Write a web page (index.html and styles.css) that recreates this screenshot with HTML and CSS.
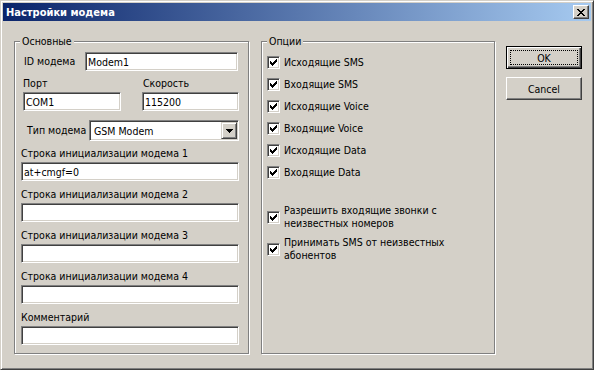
FILE: index.html
```html
<!DOCTYPE html>
<html lang="ru">
<head>
  <meta charset="UTF-8" />
  <title>Настройки модема</title>
  <link rel="stylesheet" href="styles.css">
</head>
<body>

  <div class="window">
    <!-- заголовок окна -->
    <div class="titlebar">
      <span class="title">Настройки модема</span>
      <button class="close">
        <svg width="8" height="7" viewBox="0 0 8 7" shape-rendering="crispEdges"><path d="M0 0h2v1h-2z M6 0h2v1h-2z M1 1h2v1h-2z M5 1h2v1h-2z M2 2h4v1h-4z M3 3h2v1h-2z M2 4h4v1h-4z M1 5h2v1h-2z M5 5h2v1h-2z M0 6h2v1h-2z M6 6h2v1h-2z" fill="#000"/></svg>
      </button>
    </div>

    <div class="body">
      <!-- Основные -->
      <div class="group group-main">
        <div class="group-title">Основные</div>

        <div class="row-id">
          <span class="label">ID модема</span>
          <input class="field" type="text" value="Modem1">
        </div>

        <div class="row-pair">
          <div class="col-port">
            <span class="label">Порт</span>
            <input class="field" type="text" value="COM1">
          </div>
          <div class="col-speed">
            <span class="label">Скорость</span>
            <input class="field" type="text" value="115200">
          </div>
        </div>

        <div class="row-type">
          <span class="label">Тип модема</span>
          <div class="combo">
            <span class="combo-text">GSM Modem</span>
            <span class="combo-btn">
              <svg width="7" height="4" viewBox="0 0 7 4" shape-rendering="crispEdges"><path d="M0 0h7v1h-1v1h-1v1h-1v1h-1v-1h-1v-1h-1v-1h-1z" fill="#000"/></svg>
            </span>
          </div>
        </div>

        <div class="init first">
          <span class="label">Строка инициализации модема 1</span>
          <input class="field" type="text" value="at+cmgf=0">
        </div>
        <div class="init">
          <span class="label">Строка инициализации модема 2</span>
          <input class="field" type="text" value="">
        </div>
        <div class="init">
          <span class="label">Строка инициализации модема 3</span>
          <input class="field" type="text" value="">
        </div>
        <div class="init">
          <span class="label">Строка инициализации модема 4</span>
          <input class="field" type="text" value="">
        </div>
        <div class="init">
          <span class="label">Комментарий</span>
          <input class="field" type="text" value="">
        </div>
      </div>

      <!-- Опции -->
      <div class="group group-opts">
        <div class="group-title">Опции</div>

        <div class="opts-list">
          <div class="check-row"><span class="check"><svg width="7" height="7" viewBox="0 0 7 7" shape-rendering="crispEdges"><path d="M6 0h1v1h-1z M5 1h2v1h-2z M0 2h1v1h-1z M4 2h3v1h-3z M0 3h2v1h-2z M3 3h3v1h-3z M0 4h5v1h-5z M1 5h3v1h-3z M2 6h1v1h-1z" fill="#000"/></svg></span>Исходящие SMS</div>
          <div class="check-row"><span class="check"><svg width="7" height="7" viewBox="0 0 7 7" shape-rendering="crispEdges"><path d="M6 0h1v1h-1z M5 1h2v1h-2z M0 2h1v1h-1z M4 2h3v1h-3z M0 3h2v1h-2z M3 3h3v1h-3z M0 4h5v1h-5z M1 5h3v1h-3z M2 6h1v1h-1z" fill="#000"/></svg></span>Входящие SMS</div>
          <div class="check-row"><span class="check"><svg width="7" height="7" viewBox="0 0 7 7" shape-rendering="crispEdges"><path d="M6 0h1v1h-1z M5 1h2v1h-2z M0 2h1v1h-1z M4 2h3v1h-3z M0 3h2v1h-2z M3 3h3v1h-3z M0 4h5v1h-5z M1 5h3v1h-3z M2 6h1v1h-1z" fill="#000"/></svg></span>Исходящие Voice</div>
          <div class="check-row"><span class="check"><svg width="7" height="7" viewBox="0 0 7 7" shape-rendering="crispEdges"><path d="M6 0h1v1h-1z M5 1h2v1h-2z M0 2h1v1h-1z M4 2h3v1h-3z M0 3h2v1h-2z M3 3h3v1h-3z M0 4h5v1h-5z M1 5h3v1h-3z M2 6h1v1h-1z" fill="#000"/></svg></span>Входящие Voice</div>
          <div class="check-row"><span class="check"><svg width="7" height="7" viewBox="0 0 7 7" shape-rendering="crispEdges"><path d="M6 0h1v1h-1z M5 1h2v1h-2z M0 2h1v1h-1z M4 2h3v1h-3z M0 3h2v1h-2z M3 3h3v1h-3z M0 4h5v1h-5z M1 5h3v1h-3z M2 6h1v1h-1z" fill="#000"/></svg></span>Исходящие Data</div>
          <div class="check-row"><span class="check"><svg width="7" height="7" viewBox="0 0 7 7" shape-rendering="crispEdges"><path d="M6 0h1v1h-1z M5 1h2v1h-2z M0 2h1v1h-1z M4 2h3v1h-3z M0 3h2v1h-2z M3 3h3v1h-3z M0 4h5v1h-5z M1 5h3v1h-3z M2 6h1v1h-1z" fill="#000"/></svg></span>Входящие Data</div>

          <div class="check-row multi first"><span class="check"><svg width="7" height="7" viewBox="0 0 7 7" shape-rendering="crispEdges"><path d="M6 0h1v1h-1z M5 1h2v1h-2z M0 2h1v1h-1z M4 2h3v1h-3z M0 3h2v1h-2z M3 3h3v1h-3z M0 4h5v1h-5z M1 5h3v1h-3z M2 6h1v1h-1z" fill="#000"/></svg></span><span>Разрешить входящие звонки с<br>неизвестных номеров</span></div>
          <div class="check-row multi"><span class="check"><svg width="7" height="7" viewBox="0 0 7 7" shape-rendering="crispEdges"><path d="M6 0h1v1h-1z M5 1h2v1h-2z M0 2h1v1h-1z M4 2h3v1h-3z M0 3h2v1h-2z M3 3h3v1h-3z M0 4h5v1h-5z M1 5h3v1h-3z M2 6h1v1h-1z" fill="#000"/></svg></span><span>Принимать SMS от неизвестных<br>абонентов</span></div>
        </div>
      </div>

      <!-- кнопки -->
      <div class="buttons">
        <button class="btn btn-default"><span class="focus">OK</span></button>
        <button class="btn"><span class="focus">Cancel</span></button>
      </div>
    </div>
  </div>

</body>
</html>
```

FILE: styles.css
```css
body {
  margin: 0;
  background: #d4d0c8;
  font-family: "DejaVu Sans Condensed", "DejaVu Sans", "Liberation Sans", sans-serif;
  font-stretch: condensed;
  font-size: 10.5px;
  color: #000;
}

.window {
  width: 594px;
  height: 370px;
  box-sizing: border-box;
  border: 1px solid;
  border-color: #d4d0c8 #404040 #404040 #d4d0c8;
  box-shadow: inset 1px 1px #fff, inset -1px -1px #808080;
  padding: 2px;
  background: #d4d0c8;
}

.titlebar {
  height: 18px;
  display: flex;
  align-items: center;
  padding: 0 2px 0 3px;
  background: linear-gradient(to right, #0a246a, #a6caf0);
}

.title {
  flex: 1;
  color: #fff;
  font-weight: bold;
  font-size: 11px;
}

.close {
  width: 16px;
  height: 14px;
  box-sizing: border-box;
  padding: 0;
  border: 1px solid;
  border-color: #fff #404040 #404040 #fff;
  box-shadow: inset -1px -1px #808080;
  background: #d4d0c8;
  display: flex;
  align-items: center;
  justify-content: center;
}

.close svg {
  margin: 0 1px 0 0;
}

.body {
  display: flex;
  align-items: flex-start;
  padding: 20px 0 0 11px;
}

.group {
  box-sizing: border-box;
  height: 313px;
  border: 1px solid #808080;
  box-shadow: inset 1px 1px #fff, 1px 1px #fff;
}

.group-main {
  width: 235px;
}

.group-opts {
  width: 234px;
  margin-left: 12px;
}

.group-title {
  width: fit-content;
  margin: -7px 0 0 5px;
  padding: 0 2px;
  line-height: 13px;
  background: #d4d0c8;
}

.label {
  display: block;
  line-height: 13px;
  white-space: nowrap;
}

.field {
  display: block;
  box-sizing: border-box;
  height: 19px;
  margin: 0;
  padding: 0 2px;
  border: 1px solid;
  border-color: #808080 #fff #fff #808080;
  box-shadow: inset 1px 1px #404040, inset -1px -1px #d4d0c8;
  background: #fff;
  font: inherit;
  color: #000;
  outline: none;
}

/* ID модема */
.row-id {
  display: flex;
  align-items: center;
  margin-top: 4px;
}

.row-id .label {
  width: 61px;
  margin-left: 9px;
}

.row-id .field {
  width: 153px;
}

/* Порт / Скорость */
.row-pair {
  display: flex;
  margin: 6px 0 0 8px;
}

.row-pair .field {
  margin-top: 2px;
}

.col-port .field {
  width: 98px;
}

.col-speed {
  margin-left: 21px;
}

.col-speed .label {
  padding-left: 1px;
}

.col-speed .field {
  width: 97px;
}

/* Тип модема */
.row-type {
  display: flex;
  align-items: center;
  margin-top: 9px;
}

.row-type .label {
  width: 62px;
  margin-left: 12px;
}

.combo {
  display: flex;
  align-items: center;
  box-sizing: border-box;
  width: 150px;
  height: 21px;
  padding: 1px;
  border: 1px solid;
  border-color: #808080 #fff #fff #808080;
  box-shadow: inset 1px 1px #404040, inset -1px -1px #d4d0c8;
  background: #fff;
}

.combo-text {
  flex: 1;
  padding-left: 3px;
}

.combo-btn {
  width: 16px;
  height: 17px;
  box-sizing: border-box;
  border: 1px solid;
  border-color: #d4d0c8 #404040 #404040 #d4d0c8;
  box-shadow: inset 1px 1px #fff, inset -1px -1px #808080;
  background: #d4d0c8;
  display: flex;
  align-items: center;
  justify-content: center;
}

/* строки инициализации */
.init .label {
  margin: 7px 0 2px 6px;
}

.init.first .label {
  margin-top: 6px;
}

.init .field {
  width: 218px;
  margin-left: 6px;
}

/* опции */
.opts-list {
  margin: 3px 0 0 5px;
}

.check-row {
  display: flex;
  align-items: center;
  height: 22px;
}

.check-row.multi {
  height: auto;
  line-height: 13px;
  margin-top: 6px;
}

.check-row.multi.first {
  margin-top: 21px;
}

.check {
  flex: none;
  width: 13px;
  height: 13px;
  box-sizing: border-box;
  margin-right: 4px;
  border: 1px solid;
  border-color: #808080 #fff #fff #808080;
  box-shadow: inset 1px 1px #404040, inset -1px -1px #d4d0c8;
  background: #fff;
  display: flex;
  align-items: center;
  justify-content: center;
}

/* кнопки */
.buttons {
  margin: 5px 0 0 11px;
}

.btn {
  display: flex;
  width: 76px;
  height: 23px;
  box-sizing: border-box;
  padding: 3px;
  border: 1px solid;
  border-color: #fff #404040 #404040 #fff;
  box-shadow: inset -1px -1px #808080;
  background: #d4d0c8;
  font: inherit;
  color: #000;
}

.btn + .btn {
  margin-top: 8px;
}

.btn-default {
  border-color: #000;
  box-shadow: inset 1px 1px #fff, inset -1px -1px #404040, inset -2px -2px #808080;
}

.focus {
  flex: 1;
  display: flex;
  align-items: center;
  justify-content: center;
  border: 1px solid transparent;
}

.btn-default .focus {
  border: 1px dotted #000;
}
```
